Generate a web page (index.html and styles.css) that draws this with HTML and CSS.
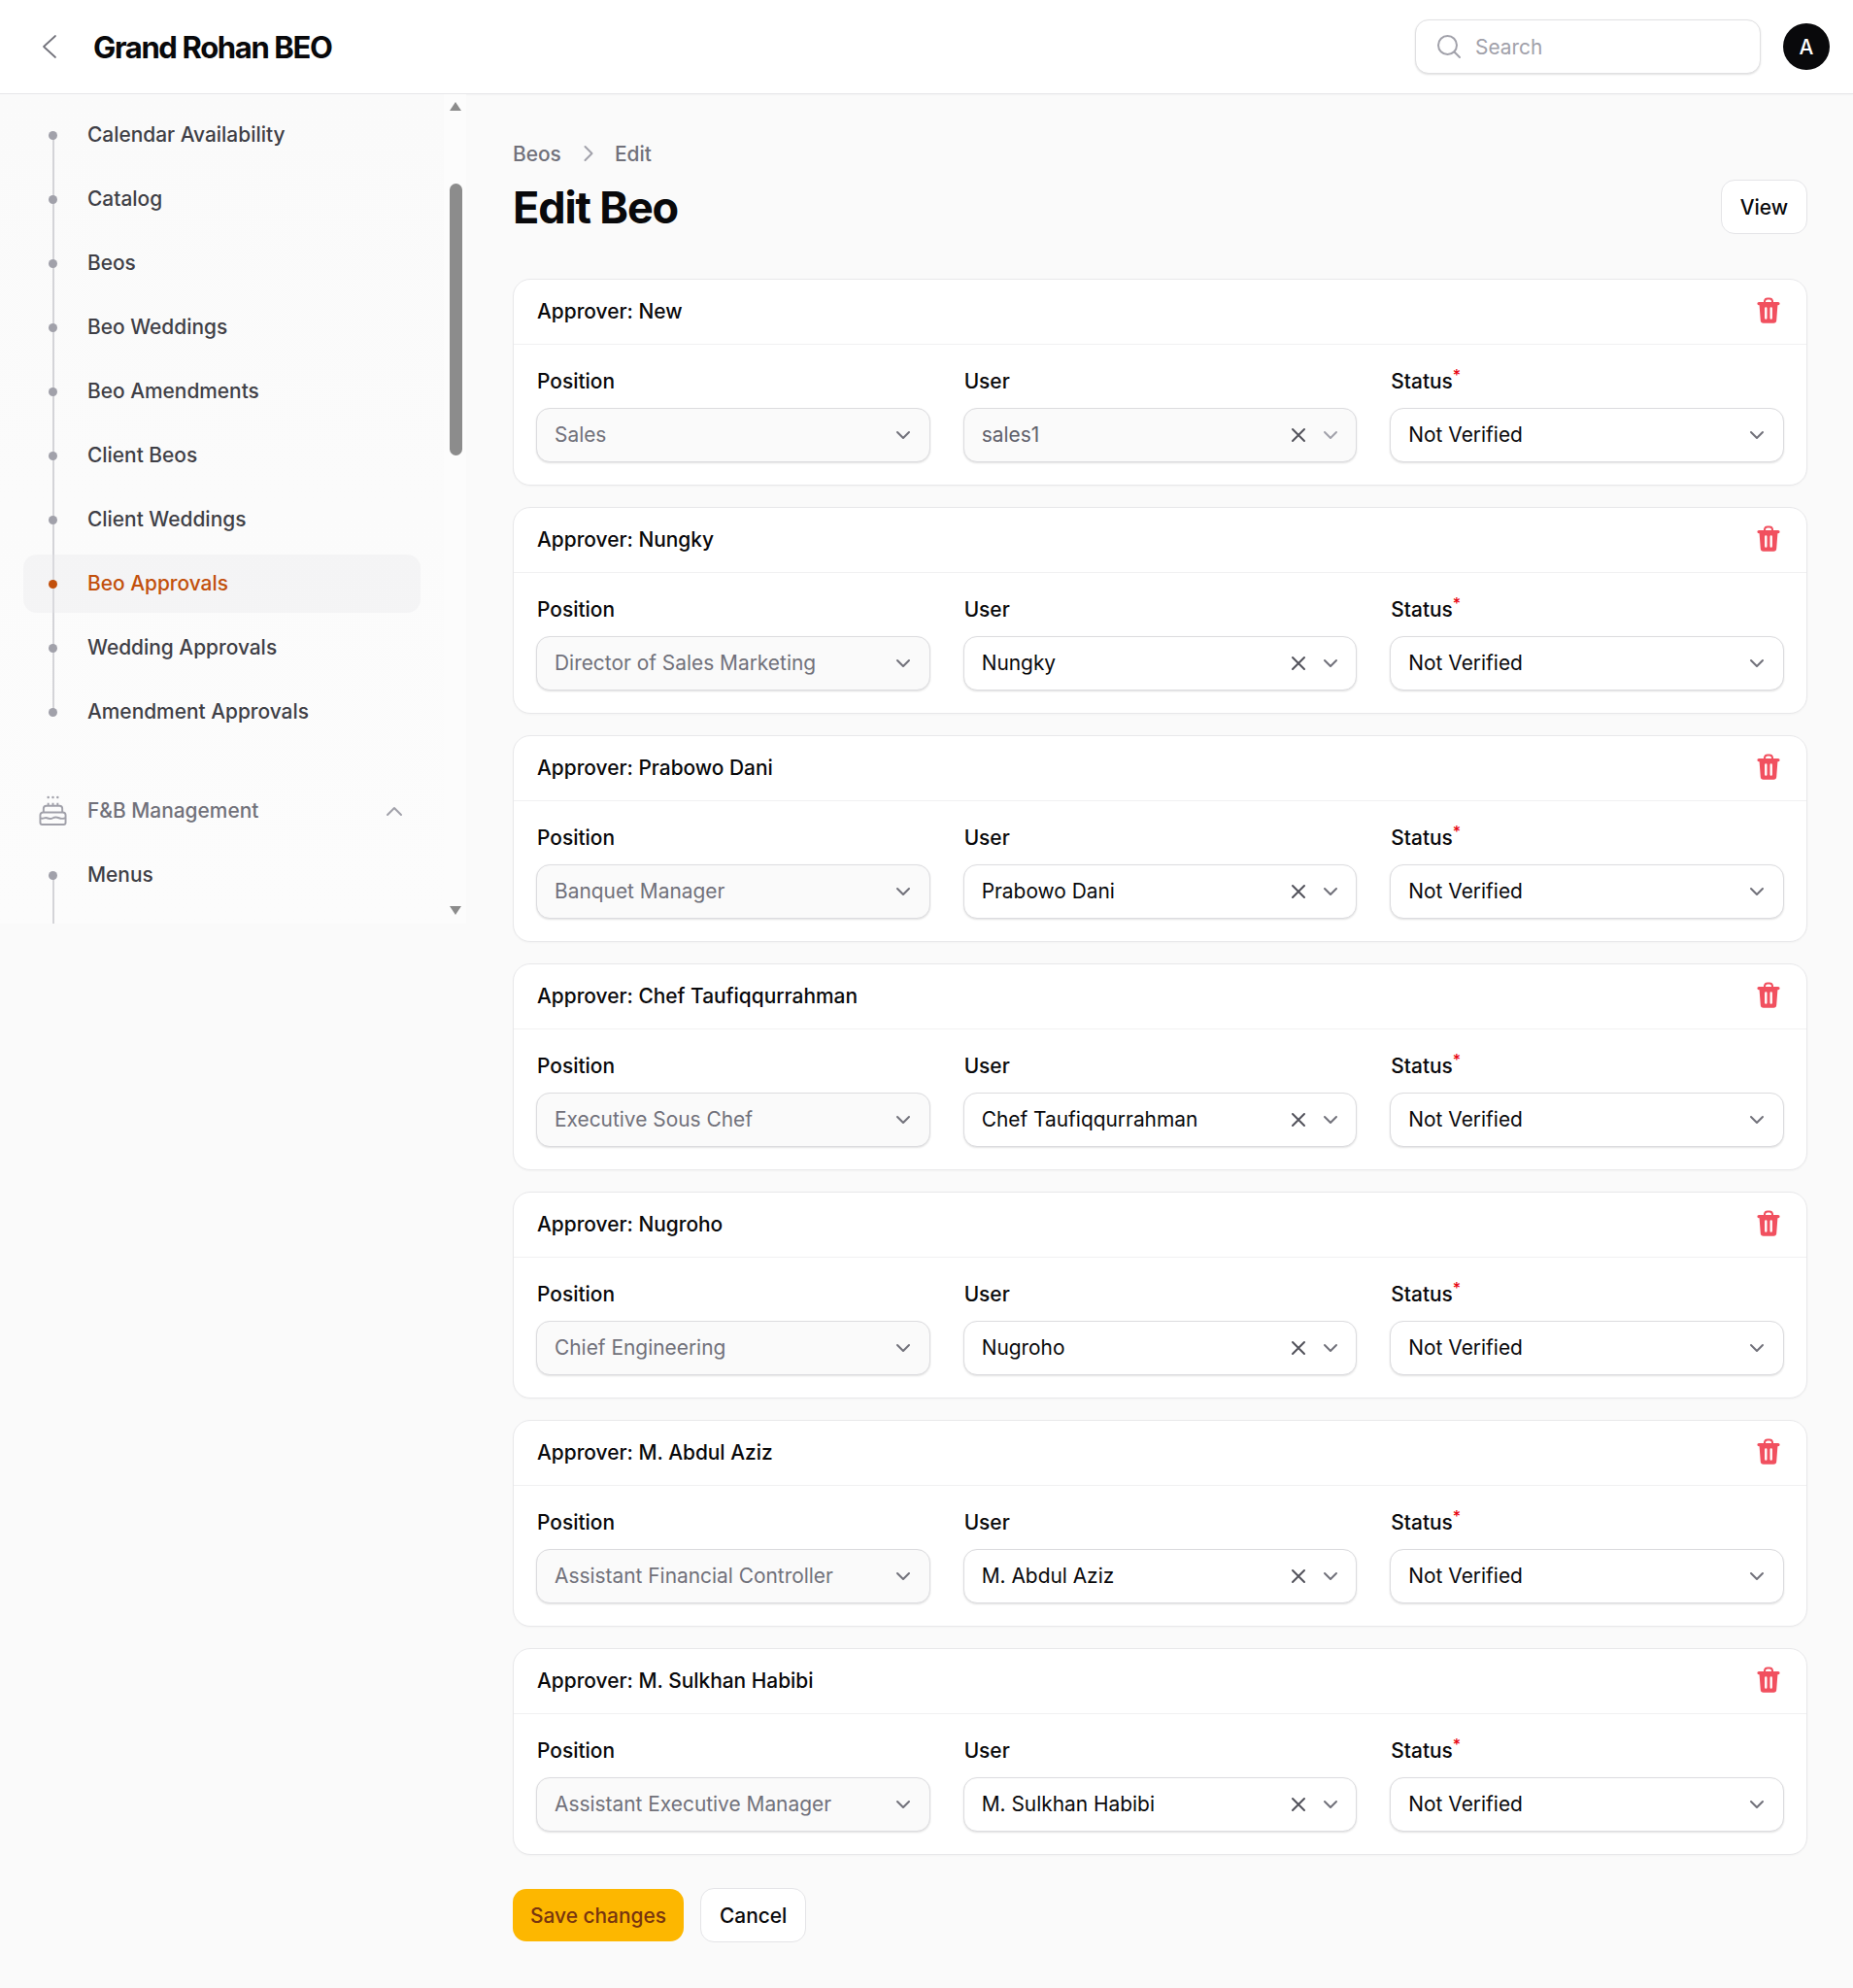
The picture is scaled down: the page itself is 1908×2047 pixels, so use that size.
FILE: index.html
```html
<!DOCTYPE html>
<html lang="en">
<head>
    <meta charset="UTF-8">
    <meta name="viewport" content="width=device-width, initial-scale=1.0">
    <title>Edit Beo</title>
    <link rel="stylesheet" href="styles.css">
</head>
<body>
    <svg class="sprite" aria-hidden="true">
        <symbol id="chevron-down" viewBox="0 0 20 20"><path d="M4 7l6 6 6-6" fill="none" stroke="currentColor" stroke-width="2" stroke-linecap="round" stroke-linejoin="round"/></symbol>
        <symbol id="close" viewBox="0 0 20 20"><path d="M4 4l12 12M16 4L4 16" fill="none" stroke="currentColor" stroke-width="2" stroke-linecap="round"/></symbol>
        <symbol id="trash" viewBox="0 0 24 28"><path d="M8 5.500V4a3 3 0 0 1 3-2.500h2a3 3 0 0 1 3 2.500v1.500" fill="none" stroke="currentColor" stroke-width="2"/><path d="M2 5h20a1.200 1.200 0 0 1 0 3.200h-.6L20.200 24a3 3 0 0 1-3 2.800H6.800a3 3 0 0 1-3-2.800L2.600 8.200H2A1.200 1.200 0 0 1 2 5z" fill="currentColor"/><path d="M9.300 11.500v10M14.700 11.500v10" stroke="#fff" stroke-width="2.400" stroke-linecap="round"/></symbol>
    </svg>

    <header class="topbar">
        <div class="topbar-left">
            <svg class="back-icon" viewBox="0 0 16 26"><path d="M14 2L2 13l12 11" fill="none" stroke="currentColor" stroke-width="1.700" stroke-linecap="round" stroke-linejoin="round"/></svg>
            <div class="brand">Grand Rohan BEO</div>
        </div>
        <div class="topbar-right">
            <div class="search">
                <svg class="search-icon" viewBox="0 0 26 26"><circle cx="11.500" cy="11.500" r="9.500" fill="none" stroke="currentColor" stroke-width="2"/><path d="M18.500 18.500L24 24" fill="none" stroke="currentColor" stroke-width="2" stroke-linecap="round"/></svg>
                <span>Search</span>
            </div>
            <div class="avatar">A</div>
        </div>
    </header>

    <div class="layout">
        <aside class="sidebar">
            <nav class="nav">
                <ul class="nav-list">
                    <li class="nav-item">Calendar Availability</li>
                    <li class="nav-item">Catalog</li>
                    <li class="nav-item">Beos</li>
                    <li class="nav-item">Beo Weddings</li>
                    <li class="nav-item">Beo Amendments</li>
                    <li class="nav-item">Client Beos</li>
                    <li class="nav-item">Client Weddings</li>
                    <li class="nav-item active">Beo Approvals</li>
                    <li class="nav-item">Wedding Approvals</li>
                    <li class="nav-item">Amendment Approvals</li>
                </ul>
                <div class="nav-group">
                    <svg class="cake-icon" viewBox="0 0 30 32" fill="none" stroke="currentColor" stroke-width="2"><path d="M1.500 21a3 3 0 0 1 3-3h21a3 3 0 0 1 3 3v8a2 2 0 0 1-2 2H3.500a2 2 0 0 1-2-2z"/><path d="M1.500 24c3 2 4.500-1 7 0s4 1.500 6.500 0 4-1 6.500 0 4 1 7 0"/><path d="M5 18v-4a3 3 0 0 1 3-3h14a3 3 0 0 1 3 3v4"/><path d="M10 11V8M15 11V8M20 11V8"/><circle cx="10" cy="2" r="1.300" fill="currentColor" stroke="none"/><circle cx="15" cy="2" r="1.300" fill="currentColor" stroke="none"/><circle cx="20" cy="2" r="1.300" fill="currentColor" stroke="none"/></svg>
                    <span class="nav-group-label">F&amp;B Management</span>
                    <svg class="group-chevron" viewBox="0 0 20 20"><path d="M3 14l7-7 7 7" fill="none" stroke="currentColor" stroke-width="2" stroke-linecap="round" stroke-linejoin="round"/></svg>
                </div>
                <ul class="nav-list open">
                    <li class="nav-item">Menus</li>
                </ul>
            </nav>
            <div class="scrollbar">
                <div class="scroll-up"></div>
                <div class="scroll-thumb"></div>
                <div class="scroll-down"></div>
            </div>
        </aside>

        <main class="content">
            <div class="breadcrumb">
                <span>Beos</span>
                <svg class="crumb-sep" viewBox="0 0 20 20"><path d="M6.500 3l7 7-7 7" fill="none" stroke="currentColor" stroke-width="2" stroke-linecap="round" stroke-linejoin="round"/></svg>
                <span>Edit</span>
            </div>
            <div class="page-head">
                <h1>Edit Beo</h1>
                <button class="btn">View</button>
            </div>

            <form class="approvers">
                <section class="card">
                    <div class="card-head">
                        <h2>Approver: New</h2>
                        <svg class="trash"><use href="#trash"/></svg>
                    </div>
                    <div class="card-body">
                        <div class="field">
                            <label>Position</label>
                            <div class="select disabled"><span>Sales</span><svg class="chev"><use href="#chevron-down"/></svg></div>
                        </div>
                        <div class="field">
                            <label>User</label>
                            <div class="select disabled dim"><span>sales1</span><svg class="clear"><use href="#close"/></svg><svg class="chev"><use href="#chevron-down"/></svg></div>
                        </div>
                        <div class="field">
                            <label>Status<sup>*</sup></label>
                            <div class="select"><span>Not Verified</span><svg class="chev"><use href="#chevron-down"/></svg></div>
                        </div>
                    </div>
                </section>

                <section class="card">
                    <div class="card-head">
                        <h2>Approver: Nungky</h2>
                        <svg class="trash"><use href="#trash"/></svg>
                    </div>
                    <div class="card-body">
                        <div class="field">
                            <label>Position</label>
                            <div class="select disabled"><span>Director of Sales Marketing</span><svg class="chev"><use href="#chevron-down"/></svg></div>
                        </div>
                        <div class="field">
                            <label>User</label>
                            <div class="select"><span>Nungky</span><svg class="clear"><use href="#close"/></svg><svg class="chev"><use href="#chevron-down"/></svg></div>
                        </div>
                        <div class="field">
                            <label>Status<sup>*</sup></label>
                            <div class="select"><span>Not Verified</span><svg class="chev"><use href="#chevron-down"/></svg></div>
                        </div>
                    </div>
                </section>

                <section class="card">
                    <div class="card-head">
                        <h2>Approver: Prabowo Dani</h2>
                        <svg class="trash"><use href="#trash"/></svg>
                    </div>
                    <div class="card-body">
                        <div class="field">
                            <label>Position</label>
                            <div class="select disabled"><span>Banquet Manager</span><svg class="chev"><use href="#chevron-down"/></svg></div>
                        </div>
                        <div class="field">
                            <label>User</label>
                            <div class="select"><span>Prabowo Dani</span><svg class="clear"><use href="#close"/></svg><svg class="chev"><use href="#chevron-down"/></svg></div>
                        </div>
                        <div class="field">
                            <label>Status<sup>*</sup></label>
                            <div class="select"><span>Not Verified</span><svg class="chev"><use href="#chevron-down"/></svg></div>
                        </div>
                    </div>
                </section>

                <section class="card">
                    <div class="card-head">
                        <h2>Approver: Chef Taufiqqurrahman</h2>
                        <svg class="trash"><use href="#trash"/></svg>
                    </div>
                    <div class="card-body">
                        <div class="field">
                            <label>Position</label>
                            <div class="select disabled"><span>Executive Sous Chef</span><svg class="chev"><use href="#chevron-down"/></svg></div>
                        </div>
                        <div class="field">
                            <label>User</label>
                            <div class="select"><span>Chef Taufiqqurrahman</span><svg class="clear"><use href="#close"/></svg><svg class="chev"><use href="#chevron-down"/></svg></div>
                        </div>
                        <div class="field">
                            <label>Status<sup>*</sup></label>
                            <div class="select"><span>Not Verified</span><svg class="chev"><use href="#chevron-down"/></svg></div>
                        </div>
                    </div>
                </section>

                <section class="card">
                    <div class="card-head">
                        <h2>Approver: Nugroho</h2>
                        <svg class="trash"><use href="#trash"/></svg>
                    </div>
                    <div class="card-body">
                        <div class="field">
                            <label>Position</label>
                            <div class="select disabled"><span>Chief Engineering</span><svg class="chev"><use href="#chevron-down"/></svg></div>
                        </div>
                        <div class="field">
                            <label>User</label>
                            <div class="select"><span>Nugroho</span><svg class="clear"><use href="#close"/></svg><svg class="chev"><use href="#chevron-down"/></svg></div>
                        </div>
                        <div class="field">
                            <label>Status<sup>*</sup></label>
                            <div class="select"><span>Not Verified</span><svg class="chev"><use href="#chevron-down"/></svg></div>
                        </div>
                    </div>
                </section>

                <section class="card">
                    <div class="card-head">
                        <h2>Approver: M. Abdul Aziz</h2>
                        <svg class="trash"><use href="#trash"/></svg>
                    </div>
                    <div class="card-body">
                        <div class="field">
                            <label>Position</label>
                            <div class="select disabled"><span>Assistant Financial Controller</span><svg class="chev"><use href="#chevron-down"/></svg></div>
                        </div>
                        <div class="field">
                            <label>User</label>
                            <div class="select"><span>M. Abdul Aziz</span><svg class="clear"><use href="#close"/></svg><svg class="chev"><use href="#chevron-down"/></svg></div>
                        </div>
                        <div class="field">
                            <label>Status<sup>*</sup></label>
                            <div class="select"><span>Not Verified</span><svg class="chev"><use href="#chevron-down"/></svg></div>
                        </div>
                    </div>
                </section>

                <section class="card">
                    <div class="card-head">
                        <h2>Approver: M. Sulkhan Habibi</h2>
                        <svg class="trash"><use href="#trash"/></svg>
                    </div>
                    <div class="card-body">
                        <div class="field">
                            <label>Position</label>
                            <div class="select disabled"><span>Assistant Executive Manager</span><svg class="chev"><use href="#chevron-down"/></svg></div>
                        </div>
                        <div class="field">
                            <label>User</label>
                            <div class="select"><span>M. Sulkhan Habibi</span><svg class="clear"><use href="#close"/></svg><svg class="chev"><use href="#chevron-down"/></svg></div>
                        </div>
                        <div class="field">
                            <label>Status<sup>*</sup></label>
                            <div class="select"><span>Not Verified</span><svg class="chev"><use href="#chevron-down"/></svg></div>
                        </div>
                    </div>
                </section>

                <div class="form-actions">
                    <button class="btn btn-primary" type="button">Save changes</button>
                    <button class="btn" type="button">Cancel</button>
                </div>
            </form>
        </main>
    </div>
</body>
</html>
```

FILE: styles.css
```css
* {
    box-sizing: border-box;
}

body {
    margin: 0;
    height: 2047px;
    overflow: hidden;
    background-color: #fafafa;
    color: #09090b;
    font-family: Inter, "Liberation Sans", sans-serif;
    font-size: 20.9px;
}

.sprite {
    display: none;
}

/* top bar */
.topbar {
    display: flex;
    justify-content: space-between;
    align-items: center;
    height: 97px;
    padding: 0 24px 0 43px;
    background-color: #fff;
    border-bottom: 1px solid #e7e7e9;
    box-shadow: 0 1px 2px rgba(0, 0, 0, 0.03);
}

.topbar-left,
.topbar-right {
    display: flex;
    align-items: center;
}

.back-icon {
    width: 16px;
    height: 26px;
    color: #71717a;
    margin-right: 37px;
}

.brand {
    font-size: 31px;
    font-weight: 700;
    letter-spacing: -1.350px;
}

.search {
    display: flex;
    align-items: center;
    width: 356px;
    height: 56px;
    padding-left: 21px;
    background-color: #fff;
    border: 1.500px solid #e0e0e2;
    border-radius: 14px;
    box-shadow: 0 1px 2px rgba(0, 0, 0, 0.12);
    color: #a1a1aa;
}

.search-icon {
    width: 26px;
    height: 26px;
    margin-right: 14px;
}

.avatar {
    display: flex;
    justify-content: center;
    align-items: center;
    width: 48px;
    height: 48px;
    margin-left: 23px;
    border-radius: 50%;
    background-color: #09090b;
    color: #fff;
    font-size: 20.9px;
    font-weight: 500;
}

.layout {
    display: flex;
    align-items: flex-start;
}

/* sidebar */
.sidebar {
    display: flex;
    flex: none;
    width: 480px;
    height: 854px;
    overflow: hidden;
    background: linear-gradient(#fafafa, #fcfcfc);
}

.nav {
    flex: none;
    width: 457px;
    padding: 12px 0 0 24px;
}

.nav-list {
    position: relative;
    width: 409px;
    margin: 0;
    padding: 0;
    list-style: none;
}

.nav-list::before {
    content: "";
    position: absolute;
    left: 29.500px;
    top: 30px;
    bottom: 30px;
    width: 2px;
    background-color: #d4d4d8;
}

.nav-list.open::before {
    bottom: -20px;
}

.nav-item {
    position: relative;
    display: flex;
    align-items: center;
    height: 60px;
    margin-bottom: 6px;
    padding: 0 0 2px 66px;
    border-radius: 14px;
    color: #3f3f46;
    font-weight: 500;
}

.nav-item:last-child {
    margin-bottom: 0;
}

.nav-item::before {
    content: "";
    position: absolute;
    left: 26px;
    top: 26px;
    width: 9px;
    height: 9px;
    border-radius: 50%;
    background-color: #a1a1aa;
}

.nav-item.active {
    background-color: rgba(228, 228, 231, 0.3);
    color: #c2500c;
}

.nav-item.active::before {
    background-color: #c2500c;
}

.nav-group {
    display: flex;
    align-items: center;
    width: 409px;
    height: 60px;
    margin-top: 42px;
    margin-bottom: 6px;
    padding-left: 16px;
    padding-bottom: 1px;
    color: #71717a;
    font-weight: 500;
}

.cake-icon {
    width: 29px;
    height: 31px;
    margin-right: 21px;
    color: #a1a1aa;
}

.nav-group-label {
    flex: 1;
}

.group-chevron {
    width: 20px;
    height: 20px;
    margin-right: 17px;
    color: #a1a1aa;
}

.scrollbar {
    position: relative;
    flex: none;
    width: 23px;
    background-color: #fcfcfc;
}

.scroll-up {
    position: absolute;
    left: 6px;
    top: 8px;
    width: 0;
    height: 0;
    border-left: 6px solid transparent;
    border-right: 6px solid transparent;
    border-bottom: 9px solid #8c8c8c;
}

.scroll-down {
    position: absolute;
    left: 6px;
    top: 836px;
    width: 0;
    height: 0;
    border-left: 6px solid transparent;
    border-right: 6px solid transparent;
    border-top: 9px solid #8c8c8c;
}

.scroll-thumb {
    position: absolute;
    left: 5.500px;
    top: 92px;
    width: 13px;
    height: 280px;
    border-radius: 7px;
    background-color: #8c8c8c;
}

/* main */
.content {
    flex: 1;
    padding: 48px 47px 0 48px;
}

.breadcrumb {
    display: flex;
    align-items: center;
    height: 26px;
    color: #71717a;
    font-weight: 500;
}

.crumb-sep {
    width: 20px;
    height: 20px;
    margin: 0 17px 0 18px;
    color: #a1a1aa;
}

.page-head {
    display: flex;
    justify-content: space-between;
    align-items: center;
    height: 56px;
    margin-top: 14px;
    margin-bottom: 46px;
}

h1 {
    margin: 0;
    font-size: 45px;
    font-weight: 700;
    letter-spacing: -1.150px;
    color: #09090b;
}

.btn {
    height: 56px;
    padding: 0 19px;
    background-color: #fff;
    border: 1.500px solid #e4e4e7;
    border-radius: 14px;
    font-family: inherit;
    font-size: 20.9px;
    font-weight: 500;
    color: #09090b;
}

.btn-primary {
    height: 54px;
    padding: 0 18px;
    background-color: #fdb700;
    border: none;
    color: #78350f;
}

.approvers {
    display: flex;
    flex-direction: column;
    gap: 22px;
}

.card {
    height: 213px;
    background-color: #fff;
    border: 1px solid #e8e8ea;
    border-radius: 18px;
    box-shadow: 0 1px 2px rgba(0, 0, 0, 0.03);
}

.card-head {
    display: flex;
    justify-content: space-between;
    align-items: center;
    height: 67px;
    padding: 0 24px 2px;
    border-bottom: 1px solid #f1f1f2;
}

h2 {
    margin: 0;
    font-size: 20.9px;
    font-weight: 500;
    color: #09090b;
}

.trash {
    width: 24px;
    height: 28px;
    margin-right: 3px;
    color: #f1505f;
}

.card-body {
    display: grid;
    grid-template-columns: repeat(3, 1fr);
    gap: 34px;
    padding: 24px 23px 0;
}

.field label {
    display: block;
    height: 29px;
    margin-bottom: 12px;
    padding-left: 1px;
    font-weight: 500;
    line-height: 28px;
    color: #09090b;
}

.field sup {
    color: #e7000b;
    font-size: 16px;
    line-height: 0;
    vertical-align: 8px;
}

.select {
    display: flex;
    align-items: center;
    height: 56px;
    padding: 0 16.500px 1px 18px;
    background-color: #fff;
    border: 1.500px solid #dcdcdf;
    border-radius: 14px;
    box-shadow: 0 1px 2px rgba(0, 0, 0, 0.12);
}

.select span {
    flex: 1;
}

.select.disabled {
    background-color: #fafafa;
    color: #71717a;
}

.select.disabled.dim {
    color: #60606a;
}

.chev {
    width: 20px;
    height: 20px;
    color: #71717a;
}

.select.dim .chev {
    color: #a1a1aa;
}

.clear {
    width: 20px;
    height: 20px;
    margin-right: 13px;
    color: #52525b;
}

.form-actions {
    display: flex;
    align-items: center;
    gap: 17px;
    margin-top: 12px;
}
```
